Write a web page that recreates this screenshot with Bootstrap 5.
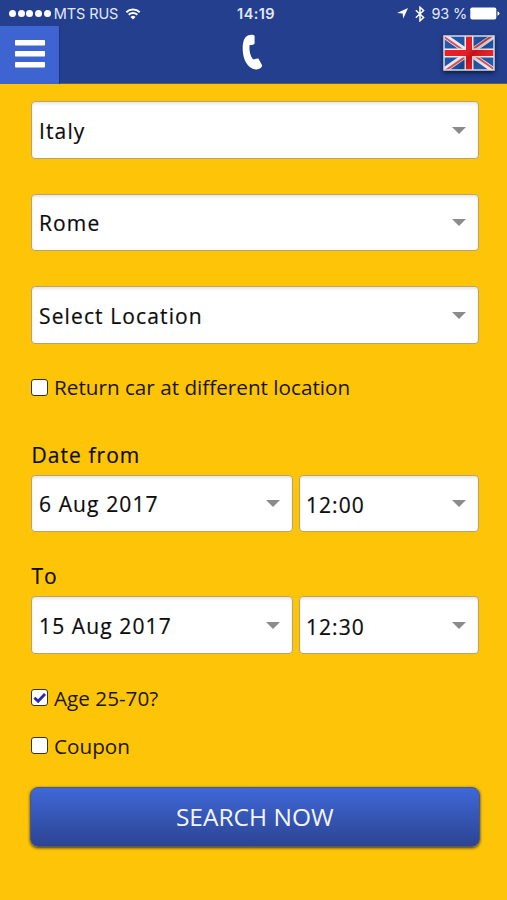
<!DOCTYPE html>
<html lang="en">
<head>
<meta charset="utf-8">
<meta name="viewport" content="width=device-width, initial-scale=1">
<title>Car rental search</title>
<link href="https://cdn.jsdelivr.net/npm/bootstrap@5.3.0/dist/css/bootstrap.min.css" rel="stylesheet">
<style>
body { background: #fdc408; font-family: "Open Sans", "Noto Sans", sans-serif; color: #0c0c0c; height: 900px; overflow: hidden; }
.top { background: #233f8e; height: 84px; border-bottom: 1px solid #5d6160; }
.status { height: 26px; font: 14.5px/26px Inter, sans-serif; color: #e3e9fb; padding: 1px 7px 0 9px; }
.status > div { flex: 1 1 0; }
.clock { font-weight: 600; font-size: 14.5px; letter-spacing: .4px; padding-left: 3px; }
.carrier { letter-spacing: -.1px; margin-left: 3px; }
.pct { letter-spacing: -.2px; margin-right: 3px; }
.sigdots { gap: 1.7px; }
.sigdots i { width: 7px; height: 7px; border-radius: 50%; background: #fff; }
.bar-main { height: 57px; }
.menu-btn { width: 60px; height: 58px; background: #3d64d0; border: 0; border-right: 1px solid #1e3677; border-radius: 0; padding: 0 0 2px; }
.phone { margin-right: 4px; }
.side { width: 60px; }
.flag { filter: drop-shadow(0 2px 2px rgba(0,0,0,.6)); margin-left: -4px; }
.search { padding: 17px 28.5px 0 31px; }
.field { height: 57.5px; background: #fff; border: 1.5px solid #b5a46c; border-radius: 4px; padding: 3px 12px 0 7px; font-size: 21px; letter-spacing: 1.12px; line-height: 1; box-shadow: inset 0 2px 3px rgba(0,0,0,.1); -webkit-text-stroke: .2px #0c0c0c; }
.field.time { letter-spacing: 1.05px; padding-left: 6px; padding-top: 5px; }
.arrow { width: 0; height: 0; border: 7px solid transparent; border-top: 7.5px solid #8b8b8b; border-bottom: 0; margin-top: -2px; }
.field.time .arrow { margin-top: -4px; }
.gap-field { margin-bottom: 35px; }
.lbl { font-size: 21px; letter-spacing: 1.05px; line-height: 30px; height: 35px; -webkit-text-stroke: .2px #0c0c0c; padding-left: .5px; }
.dates { display: grid; grid-template-columns: 261.5px 1fr; gap: 6.5px; }
.opt { height: 30px; font-size: 20.7px; line-height: 30px; gap: 6px; color: #1b1603; }
.opt .form-check-input { width: 17px; height: 17px; margin: 0; border: 1.5px solid #37332c; border-radius: 3px; background-color: #fff; box-shadow: none; }
.opt .form-check-input:checked { background-image: none; }
.checkbox-slot { width: 17px; height: 17px; }
.tick { left: 0; top: 0; pointer-events: none; }
.go { height: 60px; margin: 0 -1px; border: 1px solid #4a5a80; border-radius: 8px; background: linear-gradient(#3f68d8, #2c4492); color: #f2f5ff; font-size: 24.5px; line-height: 1; box-shadow: 0 1px 3px rgba(50,35,0,.9); padding: 2px 0 0; }
</style>
<script src="https://cdn.jsdelivr.net/npm/bootstrap@5.3.0/dist/js/bootstrap.bundle.min.js"></script>
</head>
<body>
<header class="top">
  <div class="status d-flex align-items-center">
    <div class="d-flex align-items-center">
      <span class="sigdots d-flex"><i></i><i></i><i></i><i></i><i></i></span>
      <span class="carrier text-nowrap">MTS RUS</span>
      <svg style="margin-left:7px" width="16" height="12" viewBox="0 0 15 12" fill="none" stroke="#fff" stroke-width="1.9"><path d="M.8 4.2a9.6 9.6 0 0 1 13.4 0M3.2 6.8a6.2 6.2 0 0 1 8.6 0"/><path d="M7.5 11.5 5 8.9a3.6 3.6 0 0 1 5 0z" fill="#fff" stroke="none"/></svg>
    </div>
    <span class="clock">14:19</span>
    <div class="d-flex align-items-center justify-content-end">
      <svg width="11" height="11" viewBox="0 0 11 11"><path d="M11 0 6.3 10.5 5.6 5.6 0 5z" fill="#fff"/></svg>
      <svg style="margin:0 7px" width="10" height="16" viewBox="0 0 10 16" fill="none" stroke="#fff" stroke-width="1.5"><path d="M.8 4.2 8.6 11.5 5 14.8V1.2l3.6 3.3L.8 11.8"/></svg>
      <span class="pct text-nowrap">93 %</span>
      <svg width="30" height="13" viewBox="0 0 30 13" fill="#fff"><rect x=".3" y=".5" width="26" height="12" rx="1.8"/><path d="M27.5 4.2q2 .8 2 2.3t-2 2.3z"/></svg>
    </div>
  </div>
  <div class="bar-main d-flex justify-content-between align-items-start">
    <button class="btn menu-btn d-flex align-items-center justify-content-center" type="button" aria-label="Menu">
      <svg width="30" height="29" viewBox="0 0 30 29" fill="#fff"><rect y="0" width="30" height="5.5" rx=".7"/><rect y="11" width="30" height="5.5" rx=".7"/><rect y="22" width="30" height="5.5" rx=".7"/></svg>
    </button>
    <svg class="phone mt-2" width="22" height="37" viewBox="0 0 22 37"><path d="M7.5 1.3C9.5.4 12.4.5 13.6 1.7V9.4C12.9 10.9 10.4 11.2 8.7 11 7.9 14.5 8.8 21.6 11.9 25.3 13.6 25.6 15.5 24.4 17.4 24.6L21.2 31.6C20.8 34 18 35.8 14.6 35.4 6.4 34.5 2 25.3 1.7 15.8 1.5 8.8 2.8 3.1 7.5 1.3Z" fill="#fff"/></svg>
    <div class="side d-flex pt-2">
      <svg class="flag" style="margin-top:1px" width="52" height="36" viewBox="0 0 52 36">
        <defs><clipPath id="fl"><rect x="1" y="1" width="50" height="34"/></clipPath>
        <linearGradient id="sheen" x2="1" y2=".6"><stop offset="0" stop-color="#fff" stop-opacity=".08"/><stop offset=".45" stop-color="#fff" stop-opacity=".03"/><stop offset=".65" stop-color="#000" stop-opacity=".16"/><stop offset="1" stop-color="#fff" stop-opacity=".06"/></linearGradient></defs>
        <g clip-path="url(#fl)"><path d="M0 0h52v36H0z" fill="#164da5"/>
        <path d="M0 0 52 36M52 0 0 36" stroke="#e9e6ef" stroke-width="5.5"/>
        <path d="M0 1.2 26 19.2M26 16.8 52 34.8M52 -1.2 26 16.8M26 19.2 0 37.2" stroke="#d8434c" stroke-width="2"/>
        <path d="M26 0v36M0 18h52" stroke="#f5eef0" stroke-width="9"/><path d="M26 0v36M0 18h52" stroke="#e8141c" stroke-width="6"/>
        <path d="M0 0h52v36H0z" fill="url(#sheen)"/></g>
        <path d="M1 1h50v34H1z" fill="none" stroke="#d8dbe6" stroke-width="1.5"/>
      </svg>
    </div>
  </div>
</header>
<main class="search">
  <div class="field gap-field d-flex align-items-center justify-content-between"><span>Italy</span><i class="arrow"></i></div>
  <div class="field gap-field d-flex align-items-center justify-content-between"><span>Rome</span><i class="arrow"></i></div>
  <div class="field d-flex align-items-center justify-content-between"><span>Select Location</span><i class="arrow"></i></div>
  <label class="opt d-flex align-items-center" style="margin-top:28.5px"><input class="form-check-input" type="checkbox">Return car at different location</label>
  <div class="lbl" style="margin-top:37.5px">Date from</div>
  <div class="dates">
    <div class="field d-flex align-items-center justify-content-between"><span>6 Aug 2017</span><i class="arrow"></i></div>
    <div class="field time d-flex align-items-center justify-content-between"><span>12:00</span><i class="arrow"></i></div>
  </div>
  <div class="lbl" style="margin-top:29px">To</div>
  <div class="dates">
    <div class="field d-flex align-items-center justify-content-between"><span>15 Aug 2017</span><i class="arrow"></i></div>
    <div class="field time d-flex align-items-center justify-content-between"><span>12:30</span><i class="arrow"></i></div>
  </div>
  <label class="opt d-flex align-items-center" style="margin-top:29px"><span class="checkbox-slot position-relative d-flex"><input class="form-check-input" type="checkbox" checked><svg class="tick position-absolute" width="17" height="17" viewBox="0 0 16 16"><path d="M3.2 8.2 6.7 11.5 13.2 4.8" fill="none" stroke="#2b2da4" stroke-width="2.7"/></svg></span>Age 25-70?</label>
  <label class="opt d-flex align-items-center" style="margin-top:18px"><input class="form-check-input" type="checkbox">Coupon</label>
  <div class="d-grid" style="margin-top:26px"><button class="btn go" type="button">SEARCH NOW</button></div>
</main>
</body>
</html>
